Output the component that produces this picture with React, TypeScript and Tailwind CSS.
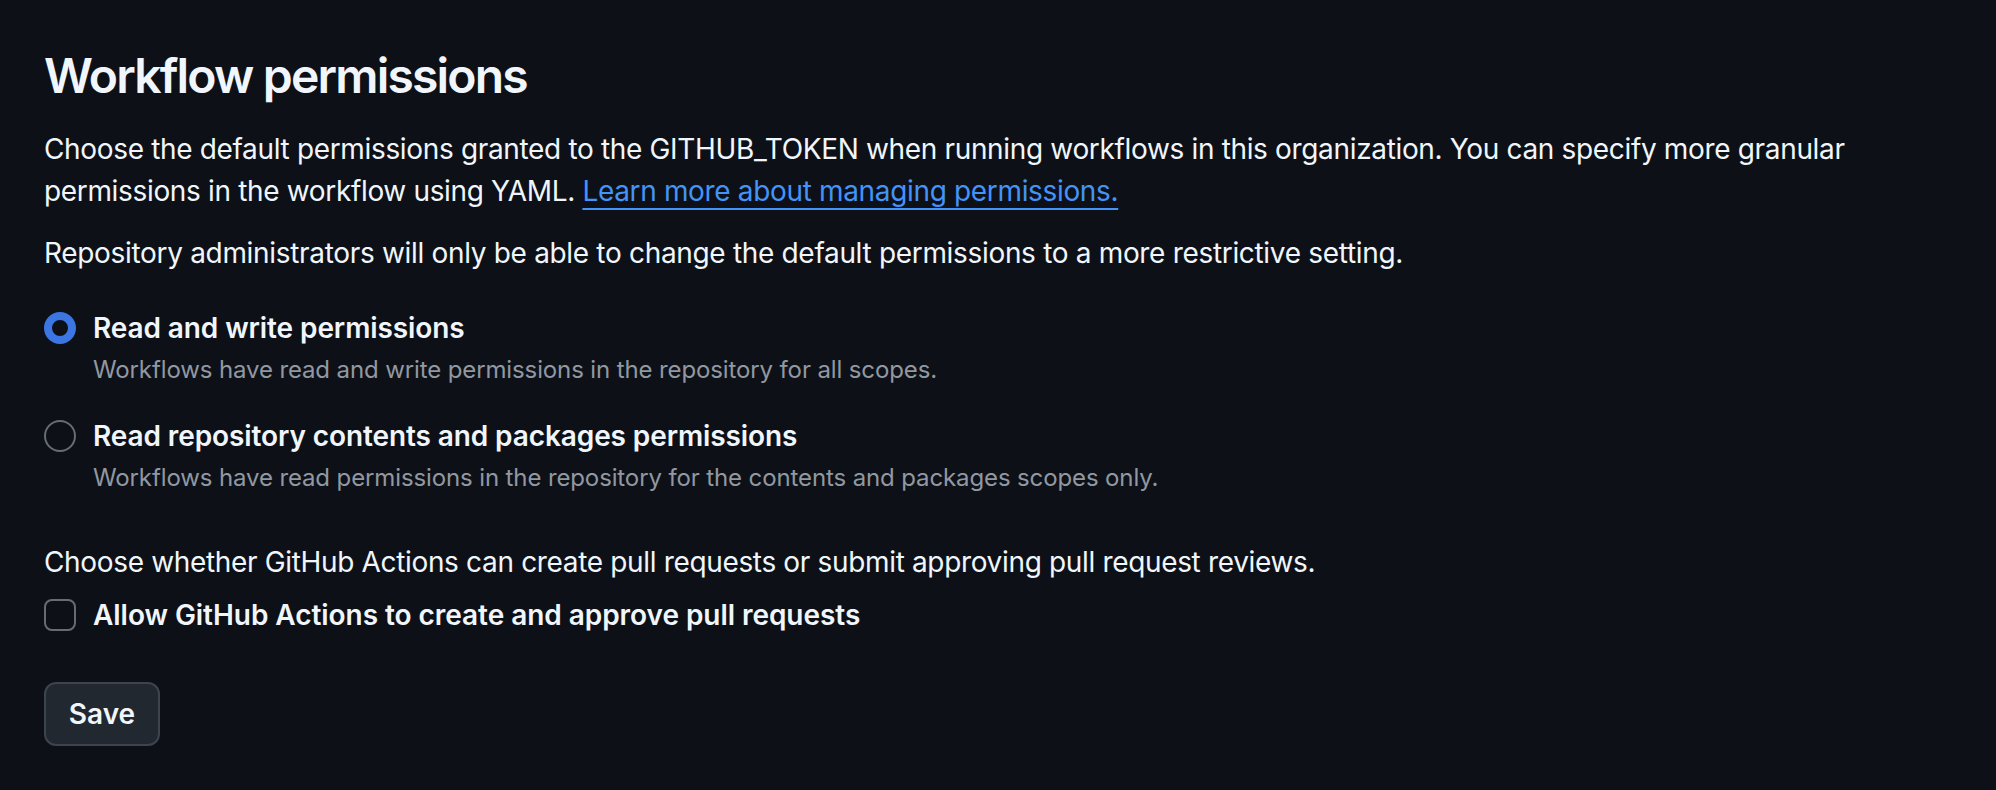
import React from 'react'

const font = { fontFamily: 'Inter, "Noto Sans", sans-serif' }

function Radio({ checked }: { checked?: boolean }) {
  return checked ? (
    <span className="block h-8 w-8 shrink-0 rounded-full border-[8px] border-[#3b76e3] bg-[#0d1117]" />
  ) : (
    <span className="block h-8 w-8 shrink-0 rounded-full border-2 border-[#656c76] bg-[#0d1117]" />
  )
}

const options = [
  {
    label: 'Read and write permissions',
    desc: 'Workflows have read and write permissions in the repository for all scopes.',
    checked: true,
  },
  {
    label: 'Read repository contents and packages permissions',
    desc: 'Workflows have read permissions in the repository for the contents and packages scopes only.',
    checked: false,
  },
]

export default function App() {
  return (
    <div className="min-h-[790px] w-full bg-[#0d1117] text-[#f0f6fc]" style={font}>
      <div className="px-[44px] pt-[46px]">
        <h2 className="text-[48px] font-semibold leading-[60px] tracking-[-1.8px]">Workflow permissions</h2>

        <p className="mt-[22px] text-[28px] leading-[42px] tracking-[-0.34px]">
          Choose the default permissions granted to the GITHUB_TOKEN when running workflows in this organization. You can specify more granular
          <br />
          permissions in the workflow using YAML.{' '}
          <a className="text-[#4493f8] underline decoration-2 underline-offset-[7px]" href="#">
            Learn more about managing permissions.
          </a>
        </p>

        <p className="mt-[20px] text-[28px] leading-[42px] tracking-[-0.32px]">
          Repository administrators will only be able to change the default permissions to a more restrictive setting.
        </p>

        <div className="mt-[33px] flex flex-col gap-[27px]">
          {options.map((o) => (
            <div key={o.label} className="flex items-start gap-[17px]">
              <div className="flex h-[42px] items-center">
                <Radio checked={o.checked} />
              </div>
              <div>
                <div className="text-[28px] font-semibold leading-[42px] tracking-[-0.1px]">{o.label}</div>
                <div className="mt-[3px] text-[24px] leading-[36px] tracking-[-0.12px] text-[#9198a1]">{o.desc}</div>
              </div>
            </div>
          ))}
        </div>

        <p className="mt-[45px] text-[28px] leading-[42px] tracking-[-0.34px]">
          Choose whether GitHub Actions can create pull requests or submit approving pull request reviews.
        </p>

        <label className="mt-[11px] flex items-center gap-[17px]">
          <span className="block h-8 w-8 shrink-0 rounded-[8px] border-2 border-[#656c76]" />
          <span className="text-[28px] font-semibold leading-[42px] tracking-[-0.05px]">Allow GitHub Actions to create and approve pull requests</span>
        </label>

        <button className="mt-[46px] h-[64px] w-[116px] rounded-[12px] border-2 border-[#3d444d] bg-[#212830] text-[28px] font-semibold text-[#f0f6fc]">
          Save
        </button>
      </div>
    </div>
  )
}
